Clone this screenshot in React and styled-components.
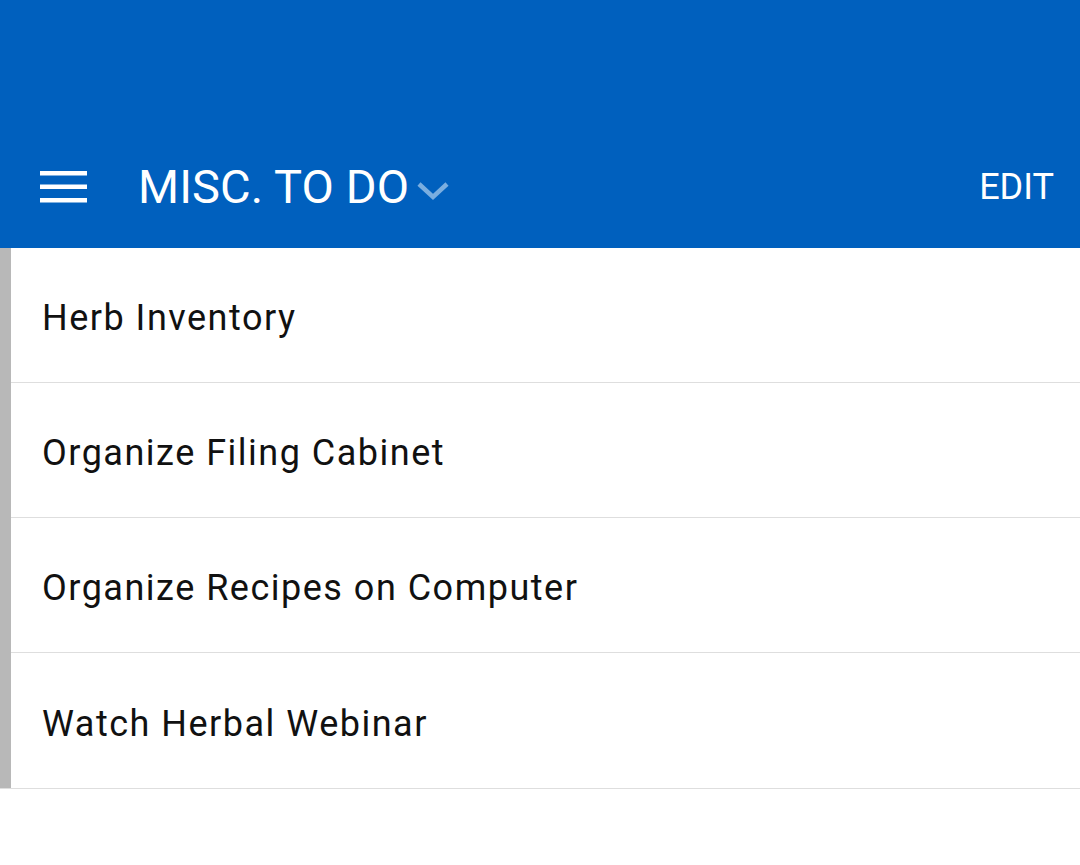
import React from "react";
import styled, { createGlobalStyle } from "styled-components";

const GlobalStyle = createGlobalStyle`
  html, body {
    margin: 0;
    padding: 0;
    background: #ffffff;
    font-family: Roboto, "Noto Sans", sans-serif;
  }
`;

const Page = styled.div`
  width: 1080px;
  min-height: 865px;
  background: #ffffff;
`;

const Header = styled.header`
  background: #0060be;
  height: 248px;
  display: flex;
  flex-direction: column;
  justify-content: flex-end;
`;

const Toolbar = styled.div`
  height: 124px;
  display: flex;
  align-items: center;
  padding: 0 26px 0 40px;
`;

const MenuButton = styled.button`
  background: none;
  border: none;
  padding: 0;
  margin: 2px 51px 0 0;
  display: flex;
  cursor: pointer;
`;

const TitleGroup = styled.div`
  display: flex;
  align-items: center;
  flex: 1;
`;

const Title = styled.h1`
  margin: 0;
  font-size: 47px;
  font-weight: 400;
  color: #ffffff;
  letter-spacing: 0.1px;
`;

const Chevron = styled.svg`
  margin: 10px 0 0 8px;
`;

const EditButton = styled.button`
  background: none;
  border: none;
  padding: 0;
  color: #ffffff;
  font-family: inherit;
  font-size: 36px;
  margin-top: 2px;
  cursor: pointer;
`;

const List = styled.ul`
  list-style: none;
  margin: 0;
  padding: 0;
  border-bottom: 1px solid #dedede;
`;

const Row = styled.li`
  height: 135px;
  display: flex;
  border-left: 11px solid #b8b8b8;
  box-sizing: border-box;
`;

const RowBody = styled.div`
  flex: 1;
  display: flex;
  align-items: center;
  padding: 6px 0 0 31px;
  font-size: 36px;
  letter-spacing: 1.5px;
  color: #111111;
  border-bottom: ${({ last }) => (last ? "none" : "1px solid #dedede")};
`;

const items = [
  "Herb Inventory",
  "Organize Filing Cabinet",
  "Organize Recipes on Computer",
  "Watch Herbal Webinar",
];

const App = () => {
  return (
    <Page>
      <GlobalStyle />
      <Header>
        <Toolbar>
          <MenuButton aria-label="menu">
            <svg width="47" height="33" viewBox="0 0 47 33">
              <rect x="0" y="0" width="47" height="4.5" fill="#fff" />
              <rect x="0" y="13.5" width="47" height="4.5" fill="#fff" />
              <rect x="0" y="27" width="47" height="4.5" fill="#fff" />
            </svg>
          </MenuButton>
          <TitleGroup>
            <Title>MISC. TO DO</Title>
            <Chevron width="32" height="20" viewBox="0 0 32 20">
              <polyline
                points="2,3 16,16 30,3"
                fill="none"
                stroke="#7aaee0"
                strokeWidth="4.5"
              />
            </Chevron>
          </TitleGroup>
          <EditButton>EDIT</EditButton>
        </Toolbar>
      </Header>
      <List>
        {items.map((item, i) => (
          <Row key={item}>
            <RowBody last={i === items.length - 1}>{item}</RowBody>
          </Row>
        ))}
      </List>
    </Page>
  );
};

export default App;
